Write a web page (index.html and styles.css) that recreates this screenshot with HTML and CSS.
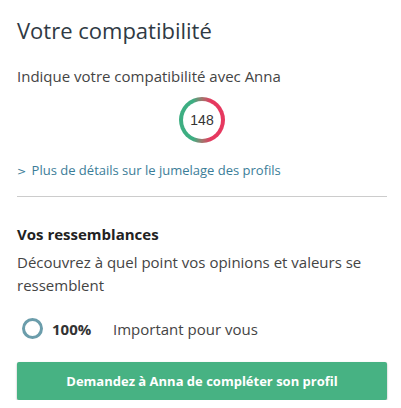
FILE: index.html
```html
<!DOCTYPE html>
<html>

<head>
    <title>Compatibilité</title>
    <link rel="stylesheet" href="styles.css">
</head>

<body>
    <div class="panel">
        <h2 class="title">Votre compatibilité</h2>
        <p class="intro">Indique votre compatibilité avec Anna</p>

        <div class="score">
            <div class="score-ring">
                <span class="score-value">148</span>
            </div>
        </div>

        <a class="details-link" href="#"><span class="chevron">&gt;</span> Plus de détails sur le jumelage des profils</a>

        <hr class="divider">

        <h3 class="subtitle">Vos ressemblances</h3>
        <p class="text">Découvrez à quel point vos opinions et valeurs se ressemblent</p>

        <div class="match-row">
            <span class="dot"></span>
            <span class="percent">100%</span>
            <span class="label">Important pour vous</span>
        </div>

        <button class="ask-btn">Demandez à Anna de compléter son profil</button>
    </div>
</body>
</html>
```

FILE: styles.css
```css
body {
    font-family: "Open Sans", sans-serif;
    background-color: #fff;
    margin: 0;
    color: #333;
}

.panel {
    width: 370px;
    padding: 14px 0 0 17px;
}

.title {
    font-size: 22px;
    font-weight: 400;
    color: #2f3a44;
    margin: 0;
    line-height: 32px;
}

.intro {
    font-size: 15px;
    color: #444;
    margin: 20px 0 0;
    line-height: 20px;
}

.score {
    display: flex;
    justify-content: center;
    margin-top: 11px;
}

/* two-colour ring, green on the left, red on the right */
.score-ring {
    width: 46px;
    height: 46px;
    border-radius: 50%;
    background: conic-gradient(#a0776d 0deg, #e6385f 25deg, #e6385f 155deg, #a0776d 180deg, #3dae82 205deg, #3dae82 335deg, #a0776d 360deg);
    display: flex;
    align-items: center;
    justify-content: center;
}

.score-value {
    width: 38px;
    height: 38px;
    border-radius: 50%;
    background-color: #fff;
    display: flex;
    align-items: center;
    justify-content: center;
    font-family: "Liberation Sans", Arial, sans-serif;
    font-size: 14px;
    color: #333;
}

.details-link {
    display: block;
    margin-top: 18px;
    font-size: 13px;
    color: #3b7d98;
    text-decoration: none;
    line-height: 18px;
}

.chevron {
    font-family: "DejaVu Sans", sans-serif;
    font-size: 11px;
    margin-right: 2px;
}

.divider {
    border: none;
    border-top: 1px solid #ccc;
    margin: 15px 0 0;
}

.subtitle {
    font-size: 15px;
    font-weight: 700;
    color: #222;
    margin: 27px 0 0;
    line-height: 20px;
}

.text {
    font-size: 15px;
    color: #444;
    margin: 7px 0 0;
    line-height: 23px;
}

.match-row {
    display: flex;
    align-items: center;
    margin-top: 21px;
    padding-left: 5px;
}

.dot {
    width: 15px;
    height: 15px;
    border: 3px solid #6b9dab;
    border-radius: 50%;
}

.percent {
    font-size: 15px;
    font-weight: 700;
    color: #333;
    margin-left: 9px;
    width: 61px;
}

.label {
    font-size: 15px;
    color: #444;
}

.ask-btn {
    display: block;
    width: 100%;
    height: 38px;
    margin-top: 23px;
    background-color: #47b283;
    color: #fff;
    border: none;
    border-radius: 2px;
    box-shadow: 0 1px 2px rgba(0, 0, 0, 0.35);
    font-family: "Open Sans", sans-serif;
    font-size: 13px;
    font-weight: 700;
    cursor: pointer;
}
```
